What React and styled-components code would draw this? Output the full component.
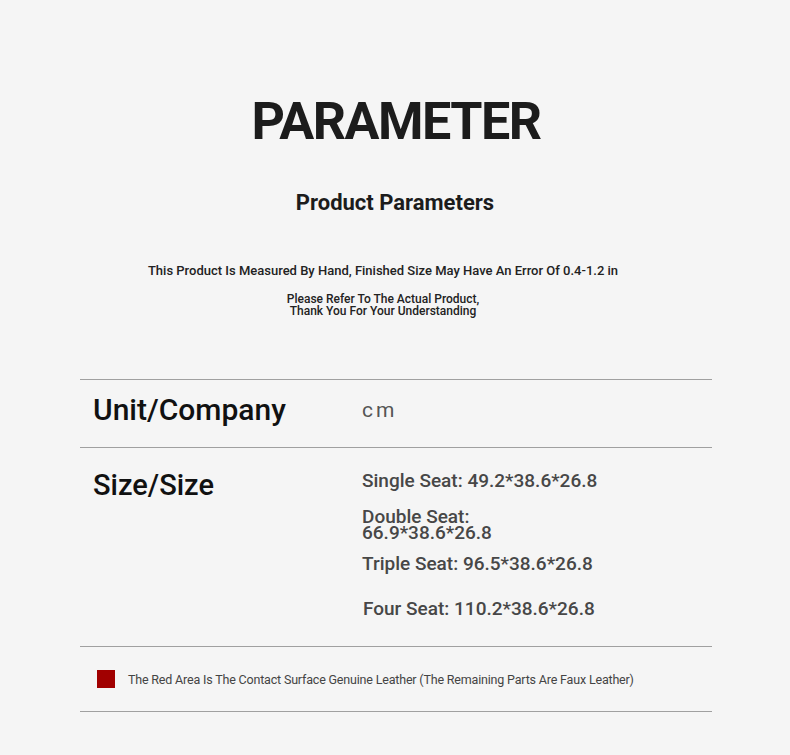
import React from "react";
import styled, { createGlobalStyle } from "styled-components";

const GlobalStyle = createGlobalStyle`
  html, body {
    margin: 0;
    padding: 0;
    background: #f5f5f5;
  }
  body {
    font-family: Roboto, "Liberation Sans", sans-serif;
    color: #1a1a1a;
  }
`;

const Page = styled.div`
  width: 790px;
  height: 755px;
  box-sizing: border-box;
  padding-top: 92px;
  background: #f5f5f5;
  overflow: hidden;
`;

const Title = styled.h1`
  margin: 0;
  text-align: center;
  font-size: 52px;
  line-height: 60px;
  font-weight: 700;
  letter-spacing: -1.5px;
  color: #1c1c1c;
  padding-left: 2px;
`;

const Subtitle = styled.h2`
  margin: 38px 0 0;
  text-align: center;
  font-size: 22px;
  line-height: 26px;
  font-weight: 700;
  color: #1c1c1c;
`;

const Note = styled.p`
  margin: ${(p) => p.$top}px 0 0;
  padding-right: 24px;
  text-align: center;
  font-size: ${(p) => p.$size}px;
  line-height: ${(p) => p.$lh}px;
  font-weight: 500;
  color: #222;
`;

const Table = styled.div`
  margin: 62px 78px 0 80px;
  border-top: 1px solid #a0a0a0;
`;

const Row = styled.div`
  display: ${(p) => (p.$legend ? "flex" : "grid")};
  align-items: ${(p) => (p.$legend ? "center" : "start")};
  grid-template-columns: 269px 1fr;
  height: ${(p) => p.$h}px;
  box-sizing: border-box;
  border-bottom: 1px solid #a0a0a0;
  padding-left: 13px;
  padding-top: ${(p) => p.$pt}px;
`;

const Label = styled.div`
  font-size: ${(p) => p.$size || 29}px;
  line-height: 34px;
  font-weight: 500;
  color: #111;
  margin-top: ${(p) => p.$mt || 0}px;
`;

const Unit = styled.div`
  font-size: 21px;
  line-height: 30px;
  color: #555;
  letter-spacing: 3px;
  padding-top: 4px;
`;

const SizeList = styled.div`
  display: flex;
  flex-direction: column;
`;

const SizeItem = styled.div`
  font-size: 19px;
  line-height: ${(p) => p.$lh || 22}px;
  font-weight: 500;
  color: #474747;
  margin-top: ${(p) => p.$mt}px;
  padding-left: ${(p) => p.$pl || 0}px;
`;

const Legend = styled.div`
  display: flex;
  align-items: center;
  gap: 13px;
  padding-left: 4px;
`;

const Swatch = styled.span`
  width: 18px;
  height: 18px;
  background: #a10000;
  flex: none;
`;

const LegendText = styled.span`
  font-size: 12.5px;
  letter-spacing: -0.18px;
  color: #444;
`;

const sizes = [
  { text: "Single Seat: 49.2*38.6*26.8", mt: 2 },
  { text: ["Double Seat:", "66.9*38.6*26.8"], mt: 17, lh: 16 },
  { text: "Triple Seat: 96.5*38.6*26.8", mt: 12 },
  { text: "Four Seat: 110.2*38.6*26.8", mt: 23, pl: 1 },
];

export default function App() {
  return (
    <Page>
      <GlobalStyle />
      <Title>PARAMETER</Title>
      <Subtitle>Product Parameters</Subtitle>
      <Note $top={47} $size={13} $lh={16}>
        This Product Is Measured By Hand, Finished Size May Have An Error Of 0.4-1.2 in
      </Note>
      <Note $top={14} $size={12} $lh={12}>
        Please Refer To The Actual Product,
        <br />
        Thank You For Your Understanding
      </Note>
      <Table>
        <Row $h={68} $pt={11}>
          <Label $size={30} $mt={2}>Unit/Company</Label>
          <Unit>cm</Unit>
        </Row>
        <Row $h={199} $pt={20}>
          <Label>Size/Size</Label>
          <SizeList>
            {sizes.map((s, i) => (
              <SizeItem key={i} $mt={s.mt} $lh={s.lh} $pl={s.pl}>
                {Array.isArray(s.text) ? (
                  <>
                    {s.text[0]}
                    <br />
                    {s.text[1]}
                  </>
                ) : (
                  s.text
                )}
              </SizeItem>
            ))}
          </SizeList>
        </Row>
        <Row $h={65} $pt={0} $legend>
          <Legend>
            <Swatch />
            <LegendText>
              The Red Area Is The Contact Surface Genuine Leather (The Remaining Parts Are Faux Leather)
            </LegendText>
          </Legend>
        </Row>
      </Table>
    </Page>
  );
}
